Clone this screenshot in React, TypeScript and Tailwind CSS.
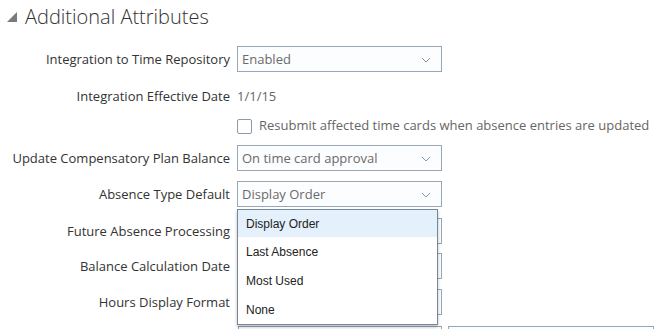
import React from "react";

const font = { fontFamily: '"Open Sans", "Noto Sans", sans-serif' };

function Chevron() {
  return (
    <svg width="10" height="6" viewBox="0 0 10 6" className="absolute right-[10px] top-[10px]">
      <path d="M1 1 L5 5 L9 1" fill="none" stroke="#8d99a6" strokeWidth="1" />
    </svg>
  );
}

function Select({ value }: { value?: string }) {
  return (
    <div className="relative h-[26px] w-[205px] border border-[#98a7b5] bg-[#fcfdfe] box-border">
      {value && (
        <span className="absolute left-[4px] top-[3px] text-[13px] leading-[18px] text-[#6a6a6a]">{value}</span>
      )}
      <Chevron />
    </div>
  );
}

function Row({ label, children, className = "" }: { label?: string; children?: React.ReactNode; className?: string }) {
  return (
    <div className={`flex h-[26px] items-center ${className}`}>
      <div className="w-[230px] shrink-0 pt-[2px] text-right text-[13px] text-[#333]">{label}</div>
      <div className="relative ml-[7px] flex items-center">{children}</div>
    </div>
  );
}

export default function App() {
  return (
    <div className="relative h-[329px] w-[662px] overflow-hidden bg-white" style={font}>
      <div className="flex h-[32px] items-center pl-[7px] pt-[2px]">
        <svg width="10" height="10" viewBox="0 0 10 10" className="mr-[8px]">
          <polygon points="0,10 10,0 10,10" fill="#7b7b7b" />
        </svg>
        <span className="text-[20px] font-light text-[#333] leading-none">Additional Attributes</span>
      </div>
      <div className="pt-[14px]">
        <Row label="Integration to Time Repository">
          <Select value="Enabled" />
        </Row>
        <Row label="Integration Effective Date" className="mt-[11px]">
          <span className="pt-[2px] text-[13px] text-[#666]">1/1/15</span>
        </Row>
        <Row className="mt-[4px]">
          <div className="h-[15px] w-[15px] rounded-[2px] border border-[#8d9aa7] bg-white box-border" />
          <span className="ml-[7px] text-[13px] text-[#666] whitespace-nowrap">
            Resubmit affected time cards when absence entries are updated
          </span>
        </Row>
        <Row label="Update Compensatory Plan Balance" className="mt-[6px]">
          <Select value="On time card approval" />
        </Row>
        <Row label="Absence Type Default" className="mt-[10px]">
          <Select value="Display Order" />
          <div
            className="absolute left-0 top-[28px] z-10 w-[201px] border border-[#76879a] bg-white shadow-[0_2px_3px_rgba(0,0,0,0.25)] box-border"
            style={{ fontFamily: '"Liberation Sans", Arial, sans-serif' }}
          >
            <div className="flex h-[27px] items-center bg-[#e4f0fc] pl-[8px] text-[12px] text-[#222]">Display Order</div>
            <div className="flex h-[29px] items-center pl-[8px] text-[12px] text-[#222]">Last Absence</div>
            <div className="flex h-[29px] items-center pl-[8px] text-[12px] text-[#222]">Most Used</div>
            <div className="flex h-[29px] items-center pl-[8px] text-[12px] text-[#222]">None</div>
          </div>
        </Row>
        <Row label="Future Absence Processing" className="mt-[11px]">
          <Select />
        </Row>
        <Row label="Balance Calculation Date" className="mt-[9px]">
          <Select />
        </Row>
        <Row label="Hours Display Format" className="mt-[10px]">
          <Select />
        </Row>
        <div className="mt-[11px] flex h-[26px] pl-[238px] gap-[6px]">
          <div className="h-[26px] w-[204px] border border-[#98a7b5] bg-[#fcfdfe]" />
          <div className="h-[26px] w-[206px] border border-[#98a7b5] bg-[#fcfdfe]" />
        </div>
      </div>
    </div>
  );
}
